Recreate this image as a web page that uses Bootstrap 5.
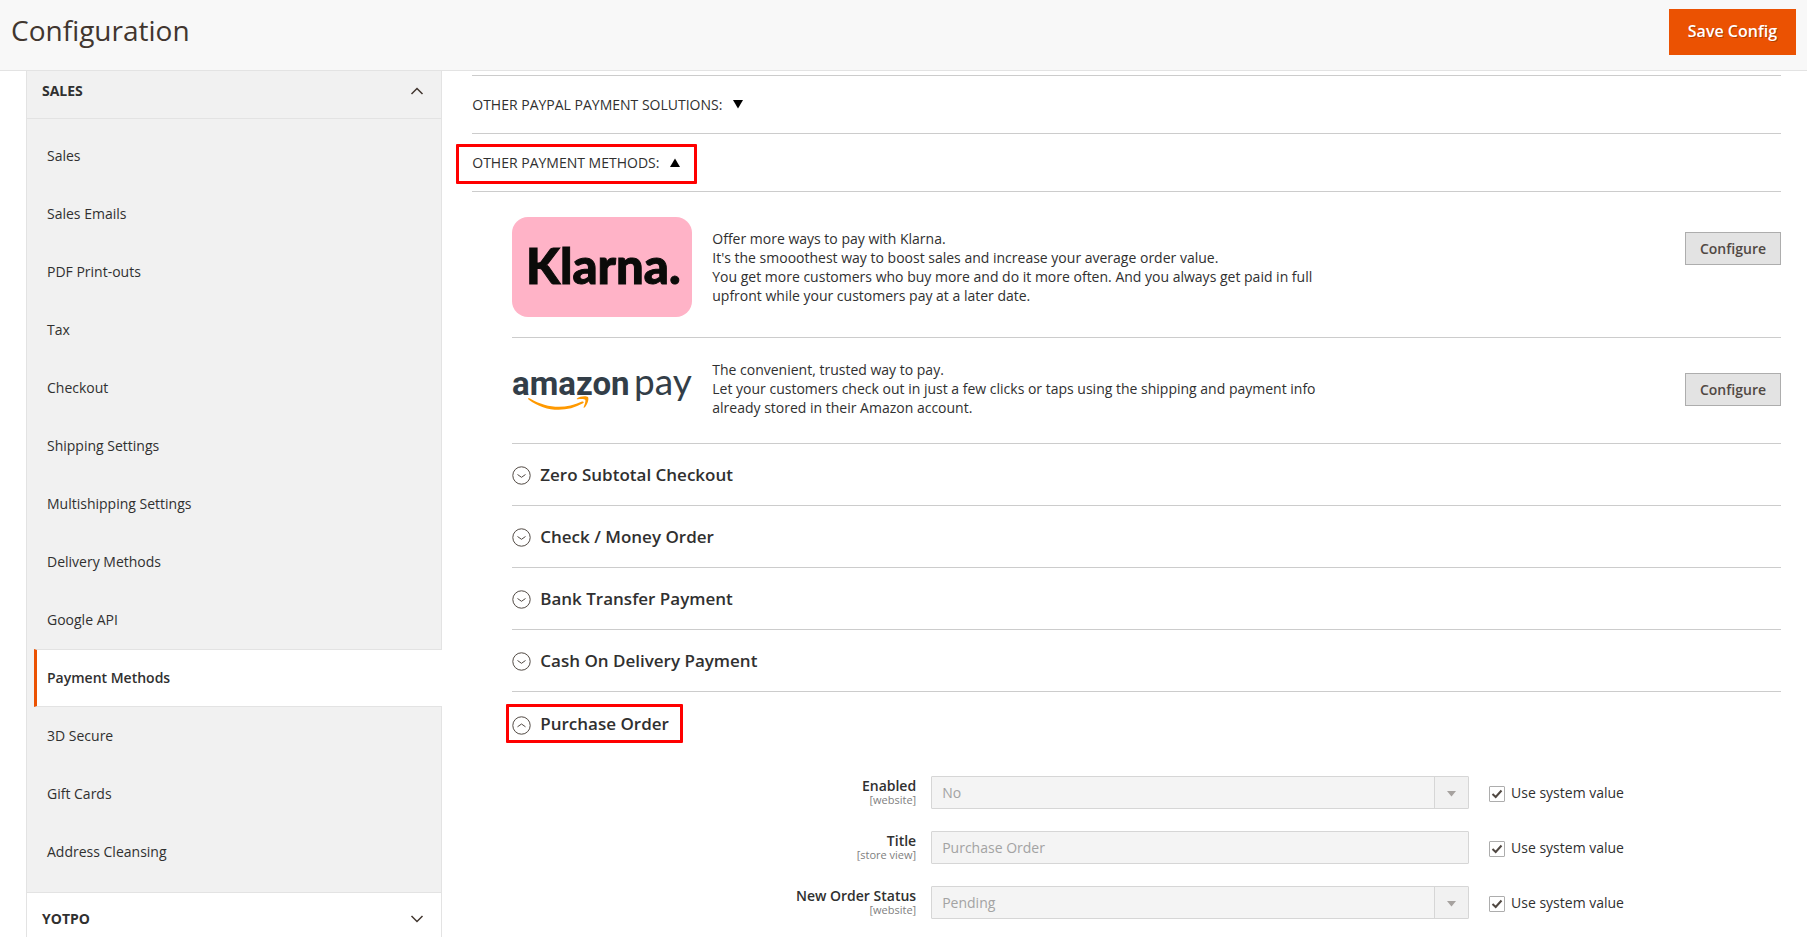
<!DOCTYPE html>
<html lang="en">
<head>
<meta charset="utf-8">
<meta name="viewport" content="width=device-width, initial-scale=1">
<title>Configuration</title>
<link href="https://cdn.jsdelivr.net/npm/bootstrap@5.3.0/dist/css/bootstrap.min.css" rel="stylesheet">
<style>
  body { font-family: "Open Sans", "Noto Sans", sans-serif; font-size: 14px; line-height: 20px; color: #303030; background: #fff; }
  a, a:hover { color: inherit; text-decoration: none; }

  /* Page header */
  .page-bar { height: 71px; background: #f8f8f8; border-bottom: 1px solid #e3e3e3; padding: 9px 11px; }
  .page-bar h1 { font-size: 28px; line-height: 42px; font-weight: 400; color: #41362f; margin: 0; }
  .btn-save { background: #eb5202; color: #fff; border: 0; border-radius: 0; font-size: 16px; font-weight: 600; line-height: 24px; padding: 10px 19px 12px; text-shadow: 1px 1px 0 rgba(0,0,0,.25); }
  .btn-save:hover { background: #ba4000; color: #fff; }
  .page-body { padding: 0 26px; }
  .page-cols { --bs-gutter-x: 30px; }

  /* Sidebar */
  .config-nav { border: solid #e3e3e3; border-width: 0 1px; background: #f1f1f1; }
  .group-toggle { width: 100%; border: 0; background: transparent; color: #303030; font-weight: 700; text-align: left; padding: 10px 17px 17px 15px; }
  .group-toggle.closed { background: #fff; border-top: 1px solid #e3e3e3; padding: 16px 17px 8px 15px; }
  .group-items { border-top: 1px solid #e3e3e3; padding: 8px 0 11px 7px; margin: 0; list-style: none; }
  .group-items a { display: block; padding: 18px 14px 18px 10px; border: solid transparent; border-width: 1px 0 1px 3px; }
  .group-items a.active { background: #fff; border-color: #e3e3e3; border-left-color: #eb5202; font-weight: 600; margin-right: -1px; }

  /* Payment sections */
  .pay-fold { height: 58px; border-top: 1px solid #ccc; }
  .pay-fold button, .method-fold button { position: relative; border: 0; background: transparent; padding: 0; color: inherit; }
  .pay-fold button { gap: 10px; }
  .fold-open { border-bottom: 1px solid #ccc; height: 59px; }
  .marked::after { content: ""; position: absolute; border: 3px solid #f00; border-radius: 1px; pointer-events: none; }
  .pay-fold .marked::after { inset: -9px -16px -11px; }
  .method-fold .marked::after { inset: -8px -14px -7px -6px; }
  .pay-inner { margin-left: 40px; }
  .provider { border-bottom: 1px solid #ccc; }
  .provider p { line-height: 19px; margin: 0; max-width: 620px; }
  .klarna { padding: 25px 0 20px; }
  .klarna p { padding-top: 12px; }
  .amazon { padding: 22px 0 23px; }
  .klarna .btn-conf { margin-top: 15px; }
  .amazon .btn-conf { margin-top: 13px; }
  .btn-conf { background: #e3e3e3; border: 1px solid #adadad; border-radius: 0; color: #514943; font-size: 14px; font-weight: 600; line-height: 19px; padding: 6px 14px; }
  .btn-conf:hover { background: #dbdbdb; border-color: #999; }
  .method-fold { height: 62px; border-bottom: 1px solid #ccc; }
  .method-fold.last { border: 0; height: 64px; }
  .method-fold button { font-size: 17px; font-weight: 600; line-height: 24px; gap: 9px; }
  .method-fold svg { margin-top: 2px; }

  /* Form */
  .pay-form { padding-top: 20px; }
  .field-row { display: grid; grid-template-columns: 404fr 538fr 297fr; column-gap: 15px; margin-bottom: 22px; }
  .field-row label.name { text-align: right; font-weight: 600; line-height: 15px; padding-top: 2px; }
  .field-row label.name span { display: block; font-size: 11px; font-weight: 400; color: #808080; line-height: 14px; }
  .field-row .entry { height: 33px; border: 1px solid #d6d6d6; border-radius: 1px; background-color: #f4f4f4; color: #a3a3a3; font-size: 14px; line-height: 19px; padding: 6px 10px; opacity: 1; box-shadow: none; }
  .field-row select.entry { background: #f4f4f4 url("data:image/svg+xml,%3Csvg xmlns='http://www.w3.org/2000/svg' width='34' height='31'%3E%3Cpath fill='%23f1f1f1' d='M0 0h34v31H0z'/%3E%3Cpath fill='%23d6d6d6' d='M0 0h1v31H0z'/%3E%3Cpath fill='%23a6a29f' d='M13 14h9l-4.500 5.500z'/%3E%3C/svg%3E") no-repeat right center; }
  .sys { gap: 6px; margin-left: 5px; }
  .sys input { appearance: none; width: 16px; height: 16px; margin: 2px 0 0; border: 1px solid #adadad; border-radius: 1px; background: #fff; }
  .sys input:checked { background: #fff url("data:image/svg+xml,%3Csvg xmlns='http://www.w3.org/2000/svg' width='14' height='14'%3E%3Cpath fill='none' stroke='%23514943' stroke-width='2' d='M2.500 7l3.200 3L11.500 3.500'/%3E%3C/svg%3E") no-repeat center; }
</style>
</head>
<body>
<header class="page-bar d-flex justify-content-between align-items-start">
  <h1>Configuration</h1>
  <button class="btn btn-save" type="button">Save Config</button>
</header>

<div class="container-fluid page-body">
  <div class="row page-cols">
    <aside class="col-3">
      <nav class="config-nav" aria-label="Configuration sections">
        <button class="group-toggle d-flex justify-content-between align-items-center" type="button" aria-expanded="true">SALES
          <svg width="14" height="8" viewBox="0 0 14 8" fill="none" stroke="#41362f" stroke-width="1.500" aria-hidden="true"><path d="M1.500 7L7 1.500 12.500 7"/></svg>
        </button>
        <ul class="group-items">
          <li><a href="#">Sales</a></li>
          <li><a href="#">Sales Emails</a></li>
          <li><a href="#">PDF Print-outs</a></li>
          <li><a href="#">Tax</a></li>
          <li><a href="#">Checkout</a></li>
          <li><a href="#">Shipping Settings</a></li>
          <li><a href="#">Multishipping Settings</a></li>
          <li><a href="#">Delivery Methods</a></li>
          <li><a href="#">Google API</a></li>
          <li><a class="active" href="#" aria-current="page">Payment Methods</a></li>
          <li><a href="#">3D Secure</a></li>
          <li><a href="#">Gift Cards</a></li>
          <li><a href="#">Address Cleansing</a></li>
        </ul>
        <button class="group-toggle closed d-flex justify-content-between align-items-center" type="button" aria-expanded="false">YOTPO
          <svg width="14" height="8" viewBox="0 0 14 8" fill="none" stroke="#41362f" stroke-width="1.500" aria-hidden="true"><path d="M1.500 1L7 6.500 12.500 1"/></svg>
        </button>
      </nav>
    </aside>

    <main class="col-9 pt-1">
      <div class="pay-fold d-flex align-items-center">
        <button type="button" class="d-flex align-items-center">OTHER PAYPAL PAYMENT SOLUTIONS:
          <svg width="12" height="10" viewBox="0 0 12 10" aria-hidden="true"><path d="M1 0h10L6 8.500z"/></svg></button>
      </div>
      <div class="pay-fold fold-open d-flex align-items-center">
        <button type="button" class="marked d-flex align-items-center">OTHER PAYMENT METHODS:
          <svg width="12" height="10" viewBox="0 0 12 10" aria-hidden="true"><path d="M1 9h10L6 .5z"/></svg></button>
      </div>

      <div class="pay-inner">
        <section class="provider klarna d-flex align-items-start">
          <svg class="flex-shrink-0 me-3" width="184" height="100" viewBox="0 0 184 100" role="img" aria-label="Klarna">
            <rect width="180" height="100" rx="16" fill="#ffb3c7"/>
            <text x="14" y="67" font-family="Lato, sans-serif" font-weight="900" font-size="49" fill="#0b0b09" stroke="#0b0b09">Klarna.</text>
          </svg>
          <p>Offer more ways to pay with Klarna.<br>It's the smooothest way to boost sales and increase your average order value.<br>You get more customers who buy more and do it more often. And you always get paid in full upfront while your customers pay at a later date.</p>
          <button class="btn btn-conf ms-auto" type="button">Configure</button>
        </section>
        <section class="provider amazon d-flex align-items-start">
          <svg class="flex-shrink-0 me-3" width="184" height="60" viewBox="0 0 184 60" role="img" aria-label="Amazon Pay">
            <text x="0" y="35" font-family="Roboto, sans-serif" font-weight="700" font-size="33" fill="#333e48">amazon</text>
            <text x="122" y="35" font-family="Lato, sans-serif" font-size="37" fill="#333e48">pay</text>
            <path fill="#f90" d="M16 38.500c.5-.8 1-.6 2 0 17 10 35 11 52 3 1.500-.5 2.500.6 1 1.800C54 53 33 52 16.500 39.500z"/>
            <path fill="#f90" d="M65 38.500c3-2.400 9-2.800 11-1.500 1.200 2-.5 8-3.500 10.500-.8.600-1.200.2-.8-.6 1-2.400 2.200-6 1.500-7.200-1-1-4.500-.8-7.400-.4-1 .1-1.300-.3-.8-.8z"/>
          </svg>
          <p>The convenient, trusted way to pay.<br>Let your customers check out in just a few clicks or taps using the shipping and payment info already stored in their Amazon account.</p>
          <button class="btn btn-conf ms-auto" type="button">Configure</button>
        </section>

        <div class="method-fold d-flex align-items-center"><button type="button" class="d-flex align-items-center" aria-expanded="false">
          <svg width="19" height="19" viewBox="0 0 19 19" fill="none" stroke="#514943" aria-hidden="true"><circle cx="9.500" cy="9.500" r="8.700"/><path d="M5.500 8.500l4 2.800 4-2.800"/></svg>Zero Subtotal Checkout</button></div>
        <div class="method-fold d-flex align-items-center"><button type="button" class="d-flex align-items-center" aria-expanded="false">
          <svg width="19" height="19" viewBox="0 0 19 19" fill="none" stroke="#514943" aria-hidden="true"><circle cx="9.500" cy="9.500" r="8.700"/><path d="M5.500 8.500l4 2.800 4-2.800"/></svg>Check / Money Order</button></div>
        <div class="method-fold d-flex align-items-center"><button type="button" class="d-flex align-items-center" aria-expanded="false">
          <svg width="19" height="19" viewBox="0 0 19 19" fill="none" stroke="#514943" aria-hidden="true"><circle cx="9.500" cy="9.500" r="8.700"/><path d="M5.500 8.500l4 2.800 4-2.800"/></svg>Bank Transfer Payment</button></div>
        <div class="method-fold d-flex align-items-center"><button type="button" class="d-flex align-items-center" aria-expanded="false">
          <svg width="19" height="19" viewBox="0 0 19 19" fill="none" stroke="#514943" aria-hidden="true"><circle cx="9.500" cy="9.500" r="8.700"/><path d="M5.500 8.500l4 2.800 4-2.800"/></svg>Cash On Delivery Payment</button></div>
        <div class="method-fold last d-flex align-items-center"><button type="button" class="marked d-flex align-items-center" aria-expanded="true">
          <svg width="19" height="19" viewBox="0 0 19 19" fill="none" stroke="#514943" aria-hidden="true"><circle cx="9.500" cy="9.500" r="8.700"/><path d="M5.500 10.800l4-2.800 4 2.800"/></svg>Purchase Order</button></div>

        <form class="pay-form">
          <div class="field-row">
            <label class="name" for="enabled">Enabled<span>[website]</span></label>
            <select class="form-select entry" id="enabled" disabled><option>No</option></select>
            <div class="sys d-flex align-items-center"><input type="checkbox" id="sys1" checked><label for="sys1">Use system value</label></div>
          </div>
          <div class="field-row">
            <label class="name" for="title">Title<span>[store view]</span></label>
            <input class="form-control entry" type="text" id="title" value="Purchase Order" disabled>
            <div class="sys d-flex align-items-center"><input type="checkbox" id="sys2" checked><label for="sys2">Use system value</label></div>
          </div>
          <div class="field-row mb-0">
            <label class="name" for="status">New Order Status<span>[website]</span></label>
            <select class="form-select entry" id="status" disabled><option>Pending</option></select>
            <div class="sys d-flex align-items-center"><input type="checkbox" id="sys3" checked><label for="sys3">Use system value</label></div>
          </div>
        </form>
      </div>
    </main>
  </div>
</div>
<script src="https://cdn.jsdelivr.net/npm/bootstrap@5.3.0/dist/js/bootstrap.bundle.min.js"></script>
</body>
</html>
